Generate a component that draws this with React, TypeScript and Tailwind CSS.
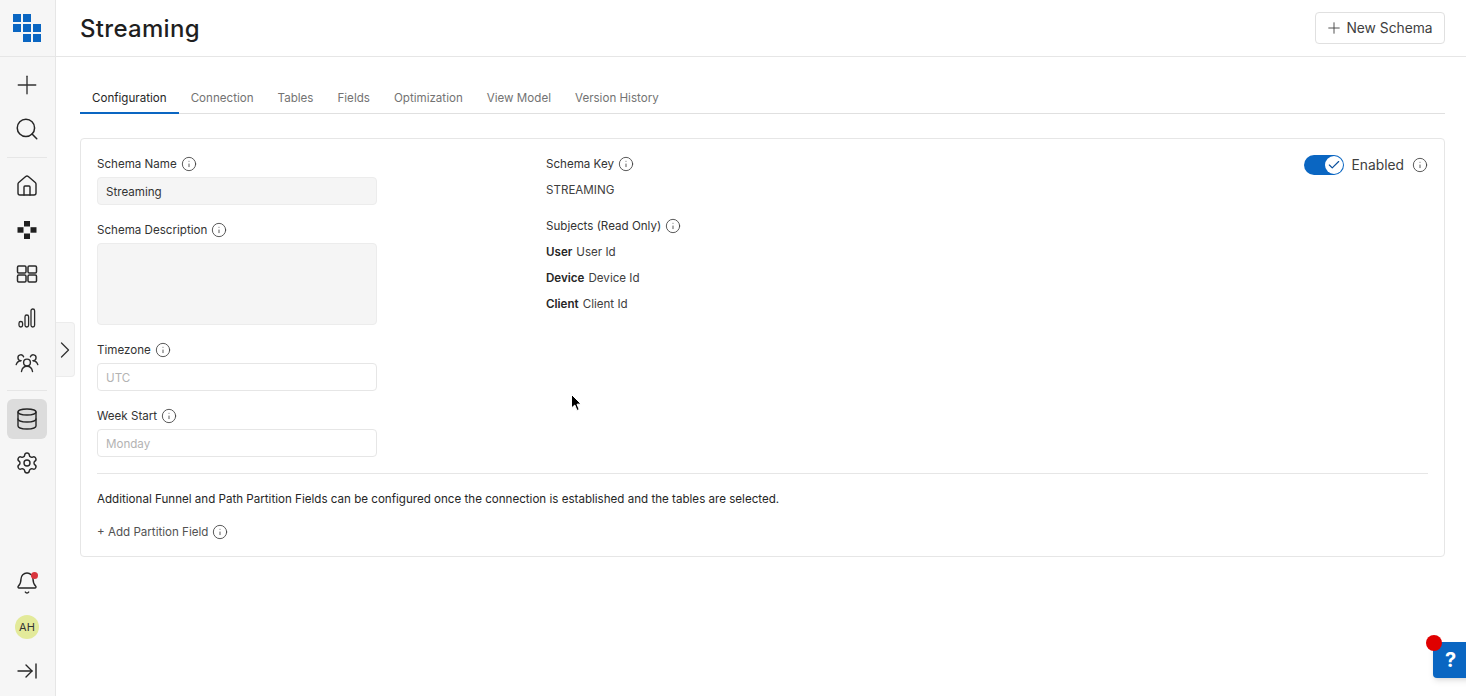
import React from 'react';
import { Plus, Search, Home, Database, Settings, Bell, ArrowRightToLine, ChevronRight, Info, Check } from 'lucide-react';

const tabs = ['Configuration', 'Connection', 'Tables', 'Fields', 'Optimization', 'View Model', 'Version History'];

function Logo() {
  return (
    <svg width="28" height="28" viewBox="0 0 28 28" fill="#0a66c2">
      <rect x="0" y="0" width="8" height="8" />
      <rect x="10" y="0" width="8" height="8" />
      <rect x="0" y="10" width="8" height="8" />
      <rect x="10" y="10" width="8" height="8" />
      <rect x="20" y="10" width="8" height="8" />
      <rect x="10" y="20" width="8" height="8" />
      <rect x="20" y="20" width="8" height="8" />
    </svg>
  );
}

function Blocks() {
  return (
    <svg width="20" height="20" viewBox="0 0 20 20" fill="#1f1f1f">
      <rect x="7" y="1" width="6" height="5.5" />
      <rect x="0.5" y="7.2" width="6" height="5.5" />
      <rect x="13.5" y="7.2" width="6" height="5.5" />
      <rect x="7" y="13.5" width="6" height="5.5" />
    </svg>
  );
}

function Dashboards() {
  return (
    <svg width="22" height="22" viewBox="0 0 22 22" fill="none" stroke="#2b2b2b" strokeWidth="1.5">
      <rect x="1.5" y="3" width="8.5" height="7" rx="1.2" />
      <rect x="12" y="3" width="8.5" height="7" rx="1.2" />
      <rect x="1.5" y="12" width="8.5" height="7" rx="1.2" />
      <rect x="12" y="12" width="8.5" height="7" rx="1.2" />
    </svg>
  );
}

function Bars() {
  return (
    <svg width="22" height="22" viewBox="0 0 22 22" fill="none" stroke="#2b2b2b" strokeWidth="1.3">
      <rect x="3" y="14.5" width="3.6" height="5.5" rx="1.8" />
      <rect x="9" y="8" width="3.6" height="12" rx="1.8" />
      <rect x="15" y="2" width="3.6" height="18" rx="1.8" />
    </svg>
  );
}

function Group() {
  return (
    <svg width="24" height="24" viewBox="0 0 24 24" fill="none" stroke="#2b2b2b" strokeWidth="1.4" strokeLinecap="round">
      <circle cx="12" cy="12.5" r="3.4" />
      <path d="M6.5 21.5c.5-3 2.6-5.2 5.5-5.2s5 2.2 5.5 5.2" />
      <path d="M8.6 6.8A2.9 2.9 0 1 0 5.8 10.6" />
      <path d="M1.2 14.6c.6-2 2.2-3.6 4.8-3.9" />
      <path d="M15.4 6.8a2.9 2.9 0 1 1 2.8 3.8" />
      <path d="M22.8 14.6c-.6-2-2.2-3.6-4.8-3.9" />
    </svg>
  );
}

function Cursor() {
  return (
    <svg width="14" height="20" viewBox="0 0 14 20" className="absolute left-[570px] top-[393px]">
      <path d="M1.5 1.5 L1.5 15 L4.8 12 L7 17.5 L9.2 16.5 L7 11.2 L11 11 Z" fill="#000" stroke="#fff" strokeWidth="1" />
    </svg>
  );
}

function Tip() {
  return <Info className="w-4 h-4 text-[#404040]" strokeWidth={1.3} />;
}

function Label({ text }: { text: string }) {
  return (
    <div className="flex items-center gap-1 h-[14px] text-[11.6px] text-[#333]">
      <span className="pt-[2px]">{text}</span>
      <Tip />
    </div>
  );
}

function NavBtn({ children, active }: { children: React.ReactNode; active?: boolean }) {
  return (
    <div className={`w-10 h-10 rounded-md flex items-center justify-center ${active ? 'bg-[#dcdcdc]' : ''}`}>
      {children}
    </div>
  );
}

export default function App() {
  const ic = 'w-6 h-6 text-[#262626]';
  return (
    <div className="relative flex h-[696px] w-[1466px] overflow-hidden bg-white text-[#262626] font-['Inter','Liberation_Sans',sans-serif]">
      <aside className="w-[56px] shrink-0 bg-[#f6f6f6] border-r border-[#e6e6e6] flex flex-col items-center pr-px">
        <div className="h-[57px] w-[55px] shrink-0 flex items-center justify-center border-b border-[#e6e6e6]">
          <Logo />
        </div>
        <div className="flex flex-col items-center gap-1 mt-[8px]">
          <NavBtn><Plus className="w-[30px] h-[30px] text-[#333]" strokeWidth={1.1} /></NavBtn>
          <NavBtn><Search className="w-[26px] h-[26px] text-[#262626]" strokeWidth={1.4} /></NavBtn>
        </div>
        <div className="w-10 border-t border-[#e6e6e6] mt-[8px] mb-[8px]" />
        <div className="flex flex-col items-center gap-1">
          <NavBtn><Home className={ic} strokeWidth={1.4} /></NavBtn>
          <NavBtn><Blocks /></NavBtn>
          <NavBtn><Dashboards /></NavBtn>
          <NavBtn><Bars /></NavBtn>
          <NavBtn><Group /></NavBtn>
        </div>
        <div className="w-10 border-t border-[#e6e6e6] mt-[8px] mb-[8px]" />
        <div className="flex flex-col items-center gap-1">
          <NavBtn active><Database className={ic} strokeWidth={1.4} /></NavBtn>
          <NavBtn><Settings className={ic} strokeWidth={1.4} /></NavBtn>
        </div>
        <div className="mt-auto flex flex-col items-center gap-1 mb-[5px]">
          <NavBtn>
            <div className="relative">
              <Bell className={ic} strokeWidth={1.4} />
              <span className="absolute top-[1px] left-[16px] w-[7px] h-[7px] rounded-full bg-[#d9363e]" />
            </div>
          </NavBtn>
          <NavBtn>
            <div className="w-6 h-6 rounded-full bg-[#e3ea9a] flex items-center justify-center text-[11px] text-[#333]">AH</div>
          </NavBtn>
          <NavBtn><ArrowRightToLine className={ic} strokeWidth={1.4} /></NavBtn>
        </div>
      </aside>

      <main className="flex-1 min-w-0 flex flex-col">
        <header className="h-[57px] shrink-0 border-b border-[#e6e6e6] flex items-center justify-between pl-6 pr-[21px]">
          <h1 className="text-2xl font-medium tracking-[0.3px] text-[#1f1f1f] mt-px">Streaming</h1>
          <button className="h-8 w-[130px] rounded border border-[#e0e0e0] pr-[2px] flex items-center justify-center gap-[3px] text-[13.8px] text-[#404040]">
            <Plus className="w-[18px] h-[18px]" strokeWidth={1.2} />
            New Schema
          </button>
        </header>

        <div className="pl-6 pr-[21px]">
          <nav className="flex mt-[25px] border-b border-[#e0e0e0] h-[32px]">
            {tabs.map((t, i) => (
              <div
                key={t}
                className={`px-3 h-[32px] pt-[3px] flex items-center text-[11.6px] border-b-2 ${i === 0 ? 'text-[#262626] border-[#0a66c2]' : 'text-[#737373] border-transparent'}`}
              >
                {t}
              </div>
            ))}
          </nav>

          <section className="mt-6 h-[419px] border border-[#e6e6e6] rounded px-4 pt-[18px]">
            <div className="flex h-[317px] border-b border-[#e6e6e6]">
              <div className="w-[449px] shrink-0">
                <Label text="Schema Name" />
                <div className="mt-[6px] w-[280px] h-7 rounded bg-[#f5f5f5] border border-[#ececec] px-2 pt-[4px] flex items-center text-[11.6px] text-[#333]">Streaming</div>
                <div className="mt-[18px]"><Label text="Schema Description" /></div>
                <div className="mt-[6px] w-[280px] h-[82px] rounded bg-[#f5f5f5] border border-[#ececec]" />
                <div className="mt-[18px]"><Label text="Timezone" /></div>
                <div className="mt-[6px] w-[280px] h-7 rounded border border-[#e6e6e6] px-2 pt-[4px] flex items-center text-[11.6px] text-[#b3b3b3]">UTC</div>
                <div className="mt-[18px]"><Label text="Week Start" /></div>
                <div className="mt-[6px] w-[280px] h-7 rounded border border-[#e6e6e6] px-2 pt-[4px] flex items-center text-[11.6px] text-[#b3b3b3]">Monday</div>
              </div>
              <div className="flex-1">
                <Label text="Schema Key" />
                <div className="mt-[12px] text-[11.6px] leading-[14px] text-[#404040]">STREAMING</div>
                <div className="mt-[22px]"><Label text="Subjects (Read Only)" /></div>
                <div className="mt-3 flex flex-col gap-3 text-[11.6px] leading-[14px] text-[#404040]">
                  <div><b className="font-semibold text-[#262626] mr-1">User</b>User Id</div>
                  <div><b className="font-semibold text-[#262626] mr-1">Device</b>Device Id</div>
                  <div><b className="font-semibold text-[#262626] mr-1">Client</b>Client Id</div>
                </div>
              </div>
              <div className="flex items-start gap-2 h-[20px] -mt-[2px]">
                <div className="w-10 h-5 rounded-full bg-[#0a66c2] flex items-center justify-end pr-[1px]">
                  <div className="w-[18px] h-[18px] rounded-full bg-white flex items-center justify-center">
                    <Check className="w-[14px] h-[14px] text-[#0a4f9c]" strokeWidth={2} />
                  </div>
                </div>
                <span className="text-[13.8px] leading-5 text-[#404040]">Enabled</span>
                <div className="h-5 flex items-center"><Tip /></div>
              </div>
            </div>
            <p className="mt-[18px] text-[11.6px] leading-[14px] text-[#262626]">
              Additional Funnel and Path Partition Fields can be configured once the connection is established and the tables are selected.
            </p>
            <div className="mt-[18px] flex items-center gap-1 text-[11.6px] leading-[14px] text-[#525252]">
              <span>+ Add Partition Field</span>
              <Tip />
            </div>
          </section>
        </div>
      </main>

      <div className="absolute left-[56px] top-[322px] w-[19px] h-[55px] bg-[#f6f6f6] border border-l-0 border-[#ececec] rounded-r flex items-center justify-center">
        <ChevronRight className="w-7 h-7 shrink-0 text-[#333]" strokeWidth={1.1} />
      </div>

      <Cursor />

      <div className="absolute left-[1433px] top-[642px] w-10 h-[36px] rounded-l-[4px] bg-[#0a66c2] shadow-md flex items-center pl-[12px] text-white text-xl font-bold">?</div>
      <div className="absolute left-[1426px] top-[635px] w-4 h-4 rounded-full bg-[#e00000]" />
    </div>
  );
}
